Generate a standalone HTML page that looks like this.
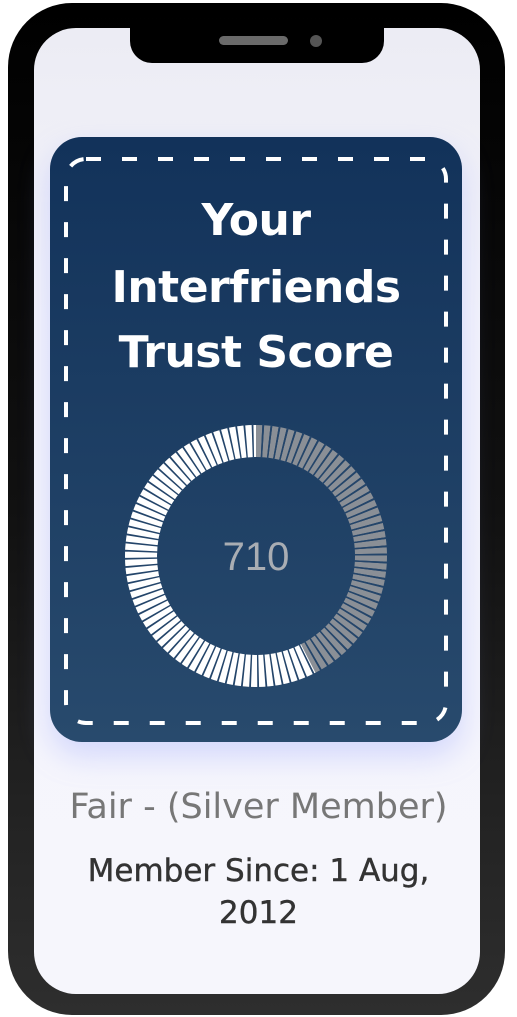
<!DOCTYPE html>
<html><head><style>
html,body{margin:0;padding:0;width:517px;height:1017px;background:#fff;overflow:hidden;font-family:"DejaVu Sans",sans-serif}
.frame{position:absolute;left:8px;top:3px;width:497px;height:1012px;border-radius:64px;background:linear-gradient(#000 0%,#111 50%,#2e2e2e 100%)}
.screen{position:absolute;left:34px;top:28px;width:446px;height:966px;border-radius:42px;background:linear-gradient(#ececf4,#f4f4fb 30%,#f6f6fc);overflow:hidden}
.notch{position:absolute;left:130px;top:20px;width:254px;height:43px;background:#000;border-radius:0 0 22px 22px}
.spk{position:absolute;left:219px;top:36px;width:69px;height:9px;border-radius:5px;background:#6a6a6a}
.cam{position:absolute;left:310px;top:35px;width:12px;height:12px;border-radius:50%;background:#555}
.card{position:absolute;left:50px;top:137px;width:412px;height:605px;border-radius:32px;background:linear-gradient(#12325a,#284a6d);box-shadow:0 14px 30px rgba(150,160,255,.35)}
.t{position:absolute;left:0;width:100%;text-align:center;color:#fff;font-weight:bold;font-size:44px;letter-spacing:-0.5px}
.txt{position:absolute;left:0;width:517px;text-align:center}
</style></head><body>
<div class="frame"></div>
<div class="screen"></div>
<div class="notch"></div><div class="spk"></div><div class="cam"></div>
<div class="card">
<svg width="412" height="605" style="position:absolute;left:0;top:0">
<rect x="16" y="22" width="380" height="564" rx="20" fill="none" stroke="#fff" stroke-width="4" stroke-dasharray="15 21"/>
</svg>
<div class="t" style="top:58px">Your</div>
<div class="t" style="top:125px">Interfriends</div>
<div class="t" style="top:190px">Trust Score</div>
</div>
<svg width="517" height="1017" style="position:absolute;left:0;top:0">
<g transform="translate(256,556) rotate(-90)">
<circle r="115" fill="none" stroke="#8a8f96" stroke-width="32" stroke-dasharray="5.6 1.6"/>
<circle r="115" fill="none" stroke="#fff" stroke-width="32" stroke-dasharray="0 307 415.6 0" />
</g>
<g transform="translate(256,556) rotate(-90)">
<circle r="115" fill="none" stroke="#24456a" stroke-width="34" stroke-dasharray="1.6 5.6" stroke-dashoffset="-5.6"/>
</g>
<text x="256" y="570" text-anchor="middle" font-size="40" fill="#a9adb3" font-family="Liberation Sans">710</text>
</svg>
<div class="txt" style="top:787px;font-size:35px;color:#777">Fair - (Silver Member)</div>
<div class="txt" style="top:850px;font-size:31px;color:#333;line-height:42px;-webkit-text-stroke:0.4px #333">Member Since: 1 Aug,<br>2012</div>
</body></html>
